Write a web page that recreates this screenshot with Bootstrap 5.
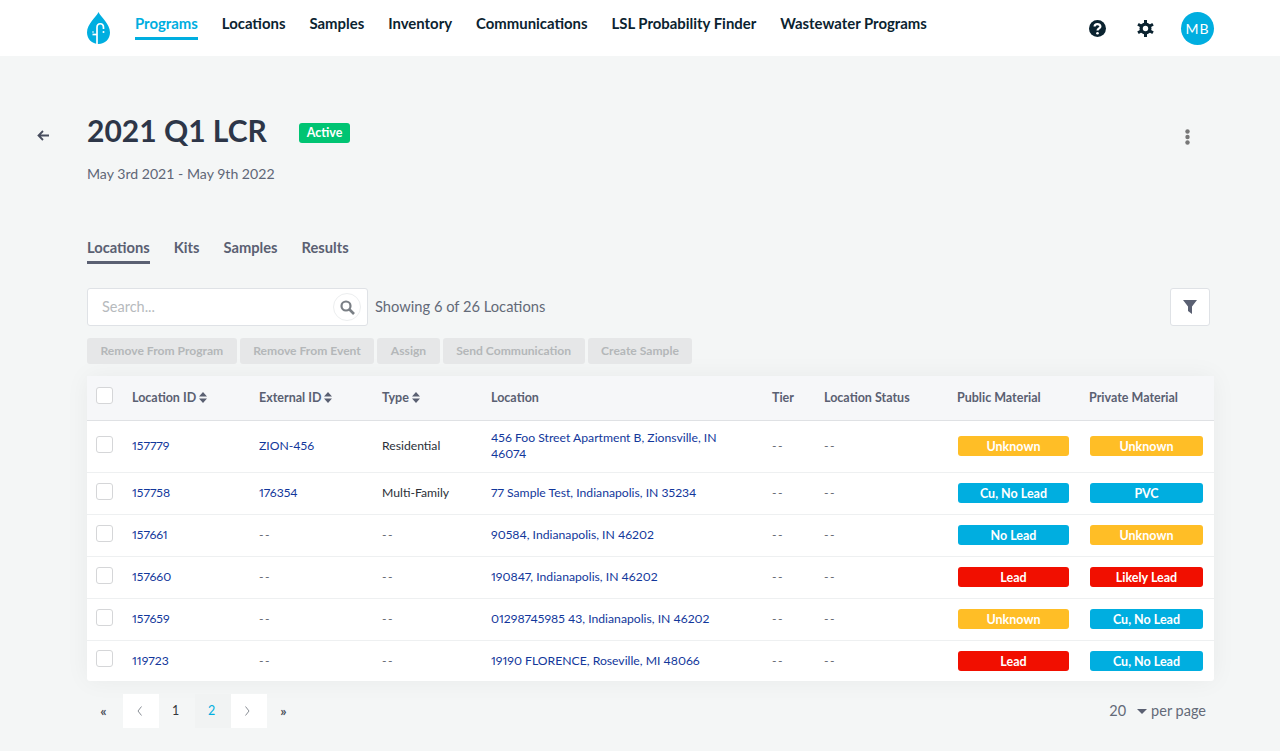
<!DOCTYPE html>
<html lang="en">
<head>
<meta charset="utf-8">
<title>2021 Q1 LCR</title>
<link rel="stylesheet" href="https://cdn.jsdelivr.net/npm/bootstrap@5.3.0/dist/css/bootstrap.min.css">
<style>
html,body{height:100%;overflow:hidden}
body{background:#f4f6f6;font-family:Lato,"Liberation Sans",sans-serif;color:#5a6072;font-size:14px}
.topbar{height:56px;background:#fff;padding:0 66px 0 87px}
.brand-drop{width:23px;height:32px;margin-top:12px;display:block}
.topnav{margin-left:25px;gap:24px;height:56px}
.topnav a{color:#0b2330;font-weight:700;font-size:14.9px;text-decoration:none;display:block;height:40px;padding-top:12px;line-height:22px;align-self:flex-start}
.topnav a.on{color:#00aee0;border-bottom:3px solid #00aee0}
.ticons{gap:27px;height:56px}
.ticons-pair{gap:31px}
.avatar{width:33px;height:33px;border-radius:50%;background:#00aee0;color:#fff;font-size:14px;letter-spacing:1px;line-height:33px;text-align:center}
.headwrap{padding:55px 70px 0 37px;height:181px}
.backarrow{width:50px;padding-top:12px}
.ptitle{font-size:30px;line-height:38px;font-weight:700;color:#2d3648;margin:0}
.pstatus{background:#00c473;color:#fff;font-weight:700;font-size:12.5px;border-radius:3px;height:20px;line-height:20px;padding:0 8px;margin:6px 0 0 32px}
.pdates{font-size:14.1px;color:#5f6677;margin-top:15px;line-height:20px}
.kebab{padding:14px 20px 0 0}
.tabsrow{padding-left:87px;gap:24px;height:51px}
.tabsrow a{display:block;height:27px;line-height:20px;font-weight:700;font-size:14.7px;color:#5a6072;text-decoration:none}
.tabsrow a.on{border-bottom:3px solid #5a6072}
.toolbar{padding:0 70px 0 87px;height:38px}
.searchbox{width:281px;height:38px;background:#fff;border:1px solid #dfe2e6;border-radius:3px;padding:0 6px 0 14px}
.searchbox input{border:0;outline:0;background:transparent;flex:1;min-width:0;font-size:14.5px;font-family:inherit;padding:0}
.searchbox input::placeholder{color:#b6babd}
.searchcirc{width:28px;height:28px;border:1px solid #eceeef;border-radius:50%}
.counttxt{margin-left:7px;padding-bottom:2px;font-size:14.7px;color:#636a78}
.filterbtn{width:40px;height:38px;background:#fff;border:1px solid #dfe2e6;border-radius:3px}
.actions{padding-left:87px;gap:3px;margin-top:12px;height:26px}
.actbtn{background:#e6e7e8;color:#b4b7b9;border:0;border-radius:3px;height:26px;font-family:inherit;font-weight:700;font-size:12.1px;padding:0 13.5px;line-height:26px}
.tablewrap{margin:12px 66px 0 87px;background:#fff;border-radius:3px;box-shadow:0 0 24px rgba(0,0,0,.05)}
.dtable{width:1127px;table-layout:fixed;border-collapse:collapse;font-size:12.2px;line-height:16px;color:#2b3038;font-variant-numeric:proportional-nums}
.dtable th{background:#f6f7f9;color:#5a6072;font-weight:700;height:44px;padding:0 9px;border-bottom:1px solid #dfe1e4;font-size:12.5px}
.dtable td{padding:0 9px;border-bottom:1px solid #eef0f1;height:42px;vertical-align:middle}
.dtable tr:last-child td{border-bottom:0;height:41px}
.dtable tr.tallrow td{height:52px}
.dtable td:nth-child(5){padding-right:25px}
.dtable th:nth-child(8),.dtable th:nth-child(9){padding-left:8px}
.dtable a{color:#12379b;text-decoration:none}
.dtable th:nth-child(1){width:36px}.dtable th:nth-child(2){width:127px}.dtable th:nth-child(3){width:123px}.dtable th:nth-child(4){width:109px}.dtable th:nth-child(5){width:281px}.dtable th:nth-child(6){width:52px}.dtable th:nth-child(7){width:134px}.dtable th:nth-child(8){width:132px}.dtable th:nth-child(9){width:133px}
.dtable td.muted{color:#5f6570;letter-spacing:1.5px}
.fakecheck{display:block;width:17px;height:17px;background:#fff;border:1px solid #d5d6d8;border-radius:3px;margin-bottom:4px}
.pill{display:block;height:20px;line-height:21px;border-radius:3px;color:#fff;font-weight:700;font-size:12.5px;text-align:center}
.dtable td:nth-child(8) .pill{width:111px}
.dtable td:nth-child(9) .pill{width:113px}
.p-unk{background:#ffbe26}.p-blue{background:#00aee0}.p-red{background:#f10f00}
.sortic{display:inline-block;width:8px;height:11px;margin-left:3px;vertical-align:-1px}
.pagerow{padding:13px 74px 0 87px;height:47px}
.pg{width:36px;height:34px;line-height:34px;text-align:center;font-size:12.5px;color:#33363c;display:flex;align-items:center;justify-content:center;padding-right:3px;text-decoration:none}
.pg.arrows{font-size:14px;font-weight:700;color:#4a4f58}
.pg.whitebox{background:#fff}
.pg.cur{background:#f1f3f3;color:#00aee0}
.perpage{font-size:14.5px;color:#636a78}
.perpage svg{margin:0 4px 0 11px}
</style>
</head>
<body>
<nav class="topbar d-flex align-items-start justify-content-between">
  <div class="d-flex">
    <svg class="brand-drop" viewBox="0 0 23 32"><path fill="#00aee0" d="M11.5 0C9.5 5 0 11.500 0 20.500 0 27 5 32 11.500 32S23 27 23 20.500C23 11.500 13.500 5 11.500 0Z"/><path fill="none" stroke="#fff" stroke-width="1.700" d="M10 32V15.500C10 10.500 16.500 10.500 16.500 15.500V17"/><path stroke="#fff" stroke-width="1.700" d="M5.500 22.500H10"/><circle cx="16.500" cy="20" r="1" fill="#fff"/><circle cx="6" cy="20" r=".8" fill="#fff"/></svg>
    <div class="topnav d-flex">
      <a class="on" href="#">Programs</a><a href="#">Locations</a><a href="#">Samples</a><a href="#">Inventory</a><a href="#">Communications</a><a href="#">LSL Probability Finder</a><a href="#">Wastewater Programs</a>
    </div>
  </div>
  <div class="ticons d-flex align-items-center">
    <div class="ticons-pair d-flex align-items-center">
    <svg width="17" height="17" viewBox="0 0 17 17"><circle cx="8.500" cy="8.500" r="8.500" fill="#0b2330"/><path fill="none" stroke="#fff" stroke-width="2.200" d="M5.600 6.600C5.600 3.400 11.400 3.400 11.400 6.500 11.400 8.500 8.500 8.300 8.500 10.600"/><circle cx="8.500" cy="13.200" r="1.300" fill="#fff"/></svg>
    <svg width="17" height="17" viewBox="0 0 17 17"><g stroke="#0b2330" stroke-width="3"><path d="M8.500 0V17M1 4.200L16 12.800M16 4.200L1 12.800"/></g><circle cx="8.500" cy="8.500" r="6" fill="#0b2330"/><circle cx="8.500" cy="8.500" r="2.700" fill="#fff"/></svg>
    </div>
    <div class="avatar">MB</div>
  </div>
</nav>
<header class="headwrap d-flex">
  <div class="backarrow"><svg width="13" height="11" viewBox="0 0 13 11"><path fill="none" stroke="#474d5e" stroke-width="1.800" d="M12 5.500H2M6 1L1.500 5.500 6 10"/></svg></div>
  <div class="flex-grow-1">
    <div class="d-flex align-items-center">
      <h1 class="ptitle">2021 Q1 LCR</h1><span class="pstatus">Active</span>
    </div>
    <div class="pdates">May 3rd 2021 - May 9th 2022</div>
  </div>
  <div class="kebab"><svg width="5" height="17" viewBox="0 0 5 17"><circle cx="2.500" cy="2.500" r="2.200" fill="#777"/><circle cx="2.500" cy="8" r="2.200" fill="#777"/><circle cx="2.500" cy="13.500" r="2.200" fill="#777"/></svg></div>
</header>
<div class="tabsrow d-flex align-items-start">
  <a class="on" href="#">Locations</a><a href="#">Kits</a><a href="#">Samples</a><a href="#">Results</a>
</div>
<div class="toolbar d-flex align-items-center justify-content-between">
  <div class="d-flex align-items-center">
    <div class="searchbox d-flex align-items-center"><input type="text" placeholder="Search..."><span class="searchcirc d-flex align-items-center justify-content-center"><svg width="15" height="15" viewBox="0 0 15 15"><circle cx="6" cy="6" r="4.500" fill="none" stroke="#7a7f85" stroke-width="2.200"/><path stroke="#7a7f85" stroke-width="2.600" d="M9.500 9.500L14 14"/></svg></span></div>
    <span class="counttxt">Showing 6 of 26 Locations</span>
  </div>
  <div class="filterbtn d-flex align-items-center justify-content-center"><svg width="14" height="14" viewBox="0 0 14 14"><path fill="#5a6072" d="M0 0H14L9 6.500V14L5 11V6.500Z"/></svg></div>
</div>
<div class="actions d-flex">
  <button class="actbtn" disabled>Remove From Program</button><button class="actbtn" disabled>Remove From Event</button><button class="actbtn" disabled>Assign</button><button class="actbtn" disabled>Send Communication</button><button class="actbtn" disabled>Create Sample</button>
</div>
<div class="tablewrap">
<table class="dtable">
<thead><tr>
<th><span class="fakecheck"></span></th>
<th>Location ID<svg class="sortic" viewBox="0 0 8 11"><path fill="#5a6072" d="M4 0L8 4.500H0ZM4 11L0 6.500H8Z"/></svg></th>
<th>External ID<svg class="sortic" viewBox="0 0 8 11"><path fill="#5a6072" d="M4 0L8 4.500H0ZM4 11L0 6.500H8Z"/></svg></th>
<th>Type<svg class="sortic" viewBox="0 0 8 11"><path fill="#5a6072" d="M4 0L8 4.500H0ZM4 11L0 6.500H8Z"/></svg></th>
<th>Location</th><th>Tier</th><th>Location Status</th><th>Public Material</th><th>Private Material</th>
</tr></thead>
<tbody>
<tr class="tallrow"><td><span class="fakecheck"></span></td><td><a href="#">157779</a></td><td><a href="#">ZION-456</a></td><td>Residential</td><td><a href="#">456 Foo Street Apartment B, Zionsville, IN 46074</a></td><td class="muted">--</td><td class="muted">--</td><td><span class="pill p-unk">Unknown</span></td><td><span class="pill p-unk">Unknown</span></td></tr>
<tr><td><span class="fakecheck"></span></td><td><a href="#">157758</a></td><td><a href="#">176354</a></td><td>Multi-Family</td><td><a href="#">77 Sample Test, Indianapolis, IN 35234</a></td><td class="muted">--</td><td class="muted">--</td><td><span class="pill p-blue">Cu, No Lead</span></td><td><span class="pill p-blue">PVC</span></td></tr>
<tr><td><span class="fakecheck"></span></td><td><a href="#">157661</a></td><td class="muted">--</td><td class="muted">--</td><td><a href="#">90584, Indianapolis, IN 46202</a></td><td class="muted">--</td><td class="muted">--</td><td><span class="pill p-blue">No Lead</span></td><td><span class="pill p-unk">Unknown</span></td></tr>
<tr><td><span class="fakecheck"></span></td><td><a href="#">157660</a></td><td class="muted">--</td><td class="muted">--</td><td><a href="#">190847, Indianapolis, IN 46202</a></td><td class="muted">--</td><td class="muted">--</td><td><span class="pill p-red">Lead</span></td><td><span class="pill p-red">Likely Lead</span></td></tr>
<tr><td><span class="fakecheck"></span></td><td><a href="#">157659</a></td><td class="muted">--</td><td class="muted">--</td><td><a href="#">01298745985 43, Indianapolis, IN 46202</a></td><td class="muted">--</td><td class="muted">--</td><td><span class="pill p-unk">Unknown</span></td><td><span class="pill p-blue">Cu, No Lead</span></td></tr>
<tr><td><span class="fakecheck"></span></td><td><a href="#">119723</a></td><td class="muted">--</td><td class="muted">--</td><td><a href="#">19190 FLORENCE, Roseville, MI 48066</a></td><td class="muted">--</td><td class="muted">--</td><td><span class="pill p-red">Lead</span></td><td><span class="pill p-blue">Cu, No Lead</span></td></tr>
</tbody>
</table>
</div>
<div class="pagerow d-flex align-items-center justify-content-between">
  <div class="d-flex">
    <a class="pg arrows" href="#">«</a>
    <a class="pg whitebox" href="#" aria-label="Previous"><svg width="5" height="10" viewBox="0 0 5 10"><path fill="none" stroke="#8a8f96" d="M4.500 .5L1 5l3.500 4.500"/></svg></a>
    <a class="pg" href="#">1</a><a class="pg cur" href="#">2</a>
    <a class="pg whitebox" href="#" aria-label="Next"><svg width="5" height="10" viewBox="0 0 5 10"><path fill="none" stroke="#8a8f96" d="M.5 .5L4 5 .5 9.500"/></svg></a>
    <a class="pg arrows" href="#">»</a>
  </div>
  <div class="perpage d-flex align-items-center">20<svg width="10" height="5" viewBox="0 0 10 5"><path fill="#5a6072" d="M0 0H10L5 5Z"/></svg>per page</div>
</div>
<script src="https://cdn.jsdelivr.net/npm/bootstrap@5.3.0/dist/js/bootstrap.bundle.min.js"></script>
</body>
</html>
